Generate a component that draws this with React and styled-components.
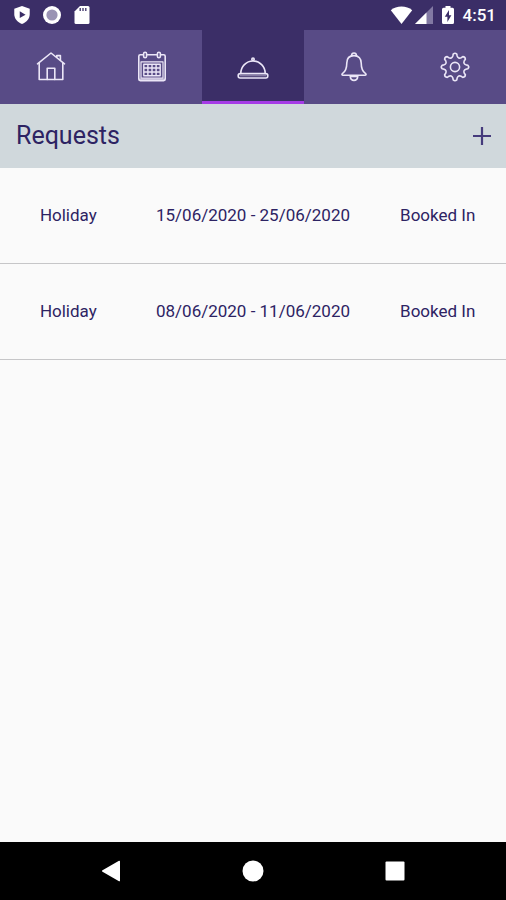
import styled, { createGlobalStyle } from "styled-components";

const GlobalStyle = createGlobalStyle`
* {
    box-sizing: border-box;
}
body {
    margin: 0;
    background: #fafafa;
    color: #2d2363;
    font-family: Roboto, "Liberation Sans", sans-serif;
}
button {
    padding: 0;
    border: 0;
    background: none;
    color: inherit;
    cursor: pointer;
}
svg {
    display: block;
}
`;

const Screen = styled.div`
display: flex;
flex-direction: column;
min-height: 100vh;
`;

const StatusBar = styled.header`
display: flex;
align-items: center;
justify-content: space-between;
height: 30px;
padding: 0 10px 0 12px;
background: #3b2e67;
color: #fff;
`;

const StatusGroup = styled.div`
display: flex;
align-items: center;
gap: ${props => props.$gap}px;
`;

const Clock = styled.time`
font-size: 17px;
font-weight: 500;
line-height: 20px;
`;

const Tabs = styled.nav`
display: flex;
height: 74px;
background: #584b86;
`;

const Tab = styled.a`
flex: 1;
display: flex;
align-items: center;
justify-content: center;
color: #ebe6f7;
background: ${props => props.$active ? "#3b2e67" : "transparent"};
box-shadow: ${props => props.$active ? "inset 0 -3px 0 #a53be6" : "none"};
`;

const TitleBar = styled.div`
display: flex;
align-items: center;
justify-content: space-between;
height: 64px;
padding: 0 12px 0 16px;
background: #d0d8dc;
`;

const Title = styled.h1`
margin: 0;
font-size: 25px;
font-weight: 400;
line-height: 32px;
`;

const AddButton = styled.button`
color: #453b7c;
`;

const Main = styled.main`
flex: 1;
`;

const RequestTable = styled.table`
width: 100%;
border-collapse: separate;
border-spacing: 0;
table-layout: fixed;
`;

const Cell = styled.td`
width: ${props => props.$width};
height: 96px;
padding: 0 0 2px;
border-bottom: 1px solid #c6c6c8;
font-size: 17px;
line-height: 24px;
text-align: center;
white-space: nowrap;
`;

const SystemNav = styled.footer`
display: flex;
height: 58px;
padding: 0 40px;
background: #000;
color: #fff;
`;

const SystemButton = styled.button`
flex: 1;
display: flex;
align-items: center;
justify-content: center;
`;

// one outline of an eight tooth wheel around 16,16
const gearPath = () => {
    const at = (r, deg) => {
        const a = (deg * Math.PI) / 180;
        return `${(16 + r * Math.sin(a)).toFixed(2)} ${(16 - r * Math.cos(a)).toFixed(2)}`;
    };
    let d = `M${at(13, -8)}`;
    for (let i = 0; i < 8; i++) {
        const t = i * 45;
        d += `Q${at(14.6, t)} ${at(13, t + 8)}`;
        d += `L${at(11.2, t + 11)}`;
        d += `Q${at(8.6, t + 22.5)} ${at(11.2, t + 34)}`;
        d += `L${at(13, t + 37)}`;
    }
    return d + "Z";
};

const LineIcon = ({ children }) => (
    <svg width="32" height="32" viewBox="0 0 32 32" fill="none" stroke="currentColor" strokeWidth="1.6" strokeLinejoin="round" strokeLinecap="round" aria-hidden="true">
        {children}
    </svg>
);

const HomeIcon = () => (
    <LineIcon>
        <path d="M2.5 12.8 16 2l13.5 10.8" />
        <path d="M4.2 12v16.5h23.6V12" />
        <path d="M12.2 28.5V17.2h7.6v11.3" />
        <path d="M21.8 6V4.6h3.6V9" />
    </LineIcon>
);

const CalendarIcon = () => (
    <LineIcon>
        <rect x="2.8" y="3.8" width="26.4" height="25.8" rx="1.5" />
        <path d="M5 10.8h22v16.4H5z" strokeWidth="1.2" />
        <path d="M3.5 28.5h25" strokeWidth="1.8" opacity=".7" />
        <path d="M7.8 13.2h16.4v11.6H7.8zM7.8 17h16.4M7.8 21h16.4M11.9 13.2v11.6M16 13.2v11.6M20.1 13.2v11.6" strokeWidth="1.4" />
        <rect x="7.6" y="1.2" width="3" height="5.6" rx="1.5" fill="#584b86" />
        <rect x="21.4" y="1.2" width="3" height="5.6" rx="1.5" fill="#584b86" />
    </LineIcon>
);

const ClocheIcon = () => (
    <LineIcon>
        <path d="M3.8 22.4a12.2 12.4 0 0 1 24.4 0" />
        <rect x="1.2" y="22.6" width="29.6" height="4.4" rx="2" />
        <path d="M3 24.8h26" strokeWidth="1" opacity=".6" />
        <circle cx="16" cy="8.2" r="1.2" />
    </LineIcon>
);

const BellIcon = () => (
    <LineIcon>
        <path d="M13.6 4.6a2.4 2.6 0 1 1 4.8 0" />
        <path d="M16 4.6c-4.8 0-7.2 3.2-7.2 7.4 0 6-1.2 8.6-4.4 10.6-.9.8-.4 1.6.6 1.6h22c1 0 1.5-.8.6-1.6-3.2-2-4.4-4.6-4.4-10.6 0-4.2-2.4-7.4-7.2-7.4Z" />
        <path d="M12.2 25.4c.3 2.6 1.8 4 3.8 4s3.5-1.4 3.8-4Z" />
    </LineIcon>
);

const GearIcon = () => (
    <LineIcon>
        <path d={gearPath()} />
        <circle cx="16" cy="16" r="4.6" />
    </LineIcon>
);

const ShieldIcon = () => (
    <svg width="20" height="20" viewBox="0 0 20 22" aria-hidden="true">
        <path d="M10 1 18.5 4v6c0 5-3.3 8.8-8.500 11-5.200-2.200-8.500-6-8.500-11V4Z" fill="currentColor" />
        <path d="M7.5 7v7.400l6.400-3.700Z" fill="#3b2e67" />
    </svg>
);

const RecordIcon = () => (
    <svg width="20" height="20" viewBox="0 0 20 20" aria-hidden="true">
        <circle cx="10" cy="10" r="9" fill="currentColor" />
        <circle cx="10" cy="10" r="5.6" fill="#9a93b4" />
    </svg>
);

const CardIcon = () => (
    <svg width="20" height="20" viewBox="0 0 20 20" aria-hidden="true">
        <path d="M8 1h8a1.5 1.5 0 0 1 1.5 1.5v15A1.5 1.5 0 0 1 16 19H4a1.5 1.5 0 0 1-1.5-1.5v-11Z" fill="currentColor" />
        <path d="M8.2 3v3M11 3v3M13.8 3v3" stroke="#3b2e67" strokeWidth="1.3" />
    </svg>
);

const WifiIcon = () => (
    <svg width="24" height="20" viewBox="0 0 24 20" aria-hidden="true">
        <path d="M12.500 19 1.800 5.200C4.600 2.800 8.400 1.500 12.500 1.500s7.900 1.300 10.700 3.700Z" fill="currentColor" />
    </svg>
);

const SignalIcon = () => (
    <svg width="18" height="18" viewBox="0 0 18 18" aria-hidden="true">
        <path d="M0 18 18 0v18Z" fill="#8279a3" />
        <path d="M0 18 11.5 6.5V18Z" fill="currentColor" />
    </svg>
);

const BatteryIcon = () => (
    <svg width="14" height="20" viewBox="0 0 14 20" aria-hidden="true">
        <path d="M4.5 1h5v1.8h2A1.5 1.5 0 0 1 13 4.3v13.2a1.5 1.5 0 0 1-1.5 1.5h-9A1.5 1.5 0 0 1 1 17.5V4.3a1.5 1.5 0 0 1 1.5-1.5h2Z" fill="currentColor" />
        <path d="M8 5 3.8 11.8h2.6V17l4-6.8H8Z" fill="#3b2e67" />
    </svg>
);

const tabs = [
    { id: "home", name: "Home", Icon: HomeIcon },
    { id: "calendar", name: "Calendar", Icon: CalendarIcon },
    { id: "requests", name: "Requests", Icon: ClocheIcon },
    { id: "notifications", name: "Notifications", Icon: BellIcon },
    { id: "settings", name: "Settings", Icon: GearIcon }
];

const requests = [
    { id: 1, type: "Holiday", dates: "15/06/2020 - 25/06/2020", status: "Booked In" },
    { id: 2, type: "Holiday", dates: "08/06/2020 - 11/06/2020", status: "Booked In" }
];

const App = () => {
    const current = "requests";
    return (
        <Screen>
            <GlobalStyle />
            <StatusBar>
                <StatusGroup $gap={10}>
                    <ShieldIcon />
                    <RecordIcon />
                    <CardIcon />
                </StatusGroup>
                <StatusGroup $gap={8}>
                    <StatusGroup $gap={2}>
                        <WifiIcon />
                        <SignalIcon />
                    </StatusGroup>
                    <BatteryIcon />
                    <Clock>4:51</Clock>
                </StatusGroup>
            </StatusBar>
            <Tabs>
                {tabs.map(({ id, name, Icon }) => (
                    <Tab key={id} href={`#${id}`} aria-label={name} $active={id === current}>
                        <Icon />
                    </Tab>
                ))}
            </Tabs>
            <TitleBar>
                <Title>Requests</Title>
                <AddButton type="button" aria-label="Add request">
                    <svg width="24" height="24" viewBox="0 0 24 24" stroke="currentColor" strokeWidth="2.2" aria-hidden="true">
                        <path d="M3 12h18M12 3v18" />
                    </svg>
                </AddButton>
            </TitleBar>
            <Main>
                <RequestTable aria-label="Requests">
                    <tbody>
                        {requests.map(x => (
                            <tr key={x.id}>
                                <Cell $width="27%">{x.type}</Cell>
                                <Cell $width="46%">{x.dates}</Cell>
                                <Cell $width="27%">{x.status}</Cell>
                            </tr>
                        ))}
                    </tbody>
                </RequestTable>
            </Main>
            <SystemNav>
                <SystemButton type="button" aria-label="Back">
                    <svg width="20" height="22" viewBox="0 0 20 22" fill="currentColor" aria-hidden="true">
                        <path d="M18 .8a.8.8 0 0 1 1 .8v18.8a.8.8 0 0 1-1 .8L1.5 11.8a.9.9 0 0 1 0-1.6Z" />
                    </svg>
                </SystemButton>
                <SystemButton type="button" aria-label="Home">
                    <svg width="22" height="22" viewBox="0 0 22 22" fill="currentColor" aria-hidden="true">
                        <circle cx="11" cy="11" r="10.5" />
                    </svg>
                </SystemButton>
                <SystemButton type="button" aria-label="Overview">
                    <svg width="20" height="20" viewBox="0 0 20 20" fill="currentColor" aria-hidden="true">
                        <rect x=".5" y=".5" width="19" height="19" rx="1" />
                    </svg>
                </SystemButton>
            </SystemNav>
        </Screen>
    );
};

export default App;
